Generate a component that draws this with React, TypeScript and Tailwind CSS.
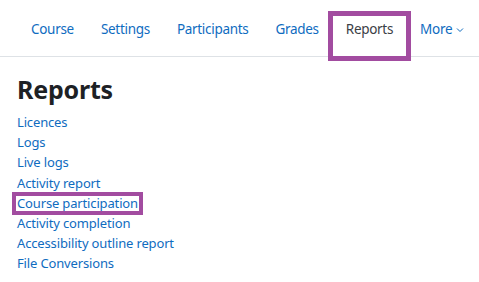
const tabs = ["Course", "Settings", "Participants", "Grades", "Reports", "More"];

const reports = [
  "Licences",
  "Logs",
  "Live logs",
  "Activity report",
  "Course participation",
  "Activity completion",
  "Accessibility outline report",
  "File Conversions",
];

export default function App() {
  return (
    <div className="w-[479px] h-[282px] bg-white overflow-hidden font-['Noto_Sans',sans-serif]">
      <nav className="flex items-center h-[57px] pl-[17.5px] border-b border-[#dee2e6]">
        {tabs.map((t) => {
          const active = t === "Reports";
          return (
            <a
              key={t}
              href="#"
              className={`relative flex items-center px-[13.5px] pt-[2px] text-[13.5px] leading-[20px] tracking-[-0.3px] ${
                active ? "text-[#3b4046]" : "text-[#0f6cbf]"
              }`}
            >
              {t}
              {t === "More" && (
                <svg width="8" height="6" viewBox="0 0 8 6" className="ml-[4px] mt-[1px]">
                  <path d="M1 1.5 L4 4.5 L7 1.5" fill="none" stroke="#0f6cbf" strokeWidth="1" />
                </svg>
              )}
              {active && (
                <span className="absolute left-[-4px] right-[-4px] top-[-6px] bottom-[-22px] border-[5px] border-[#a24ca0]" />
              )}
            </a>
          );
        })}
      </nav>
      <div className="px-[17px] pt-[16px]">
        <h2 className="text-[25px] font-bold leading-[32px] text-[#1d2125] tracking-[-0.2px] mb-[7px]">Reports</h2>
        <ul className="flex flex-col">
          {reports.map((r) => (
            <li key={r} className="leading-[20.2px] text-[13px] tracking-[-0.15px]">
              <a href="#" className="relative text-[#0f6cbf]">
                {r}
                {r === "Course participation" && (
                  <span className="absolute left-[-5px] right-[-5px] top-[-2px] bottom-[-3px] border-[4.5px] border-[#a24ca0]" />
                )}
              </a>
            </li>
          ))}
        </ul>
      </div>
    </div>
  );
}
